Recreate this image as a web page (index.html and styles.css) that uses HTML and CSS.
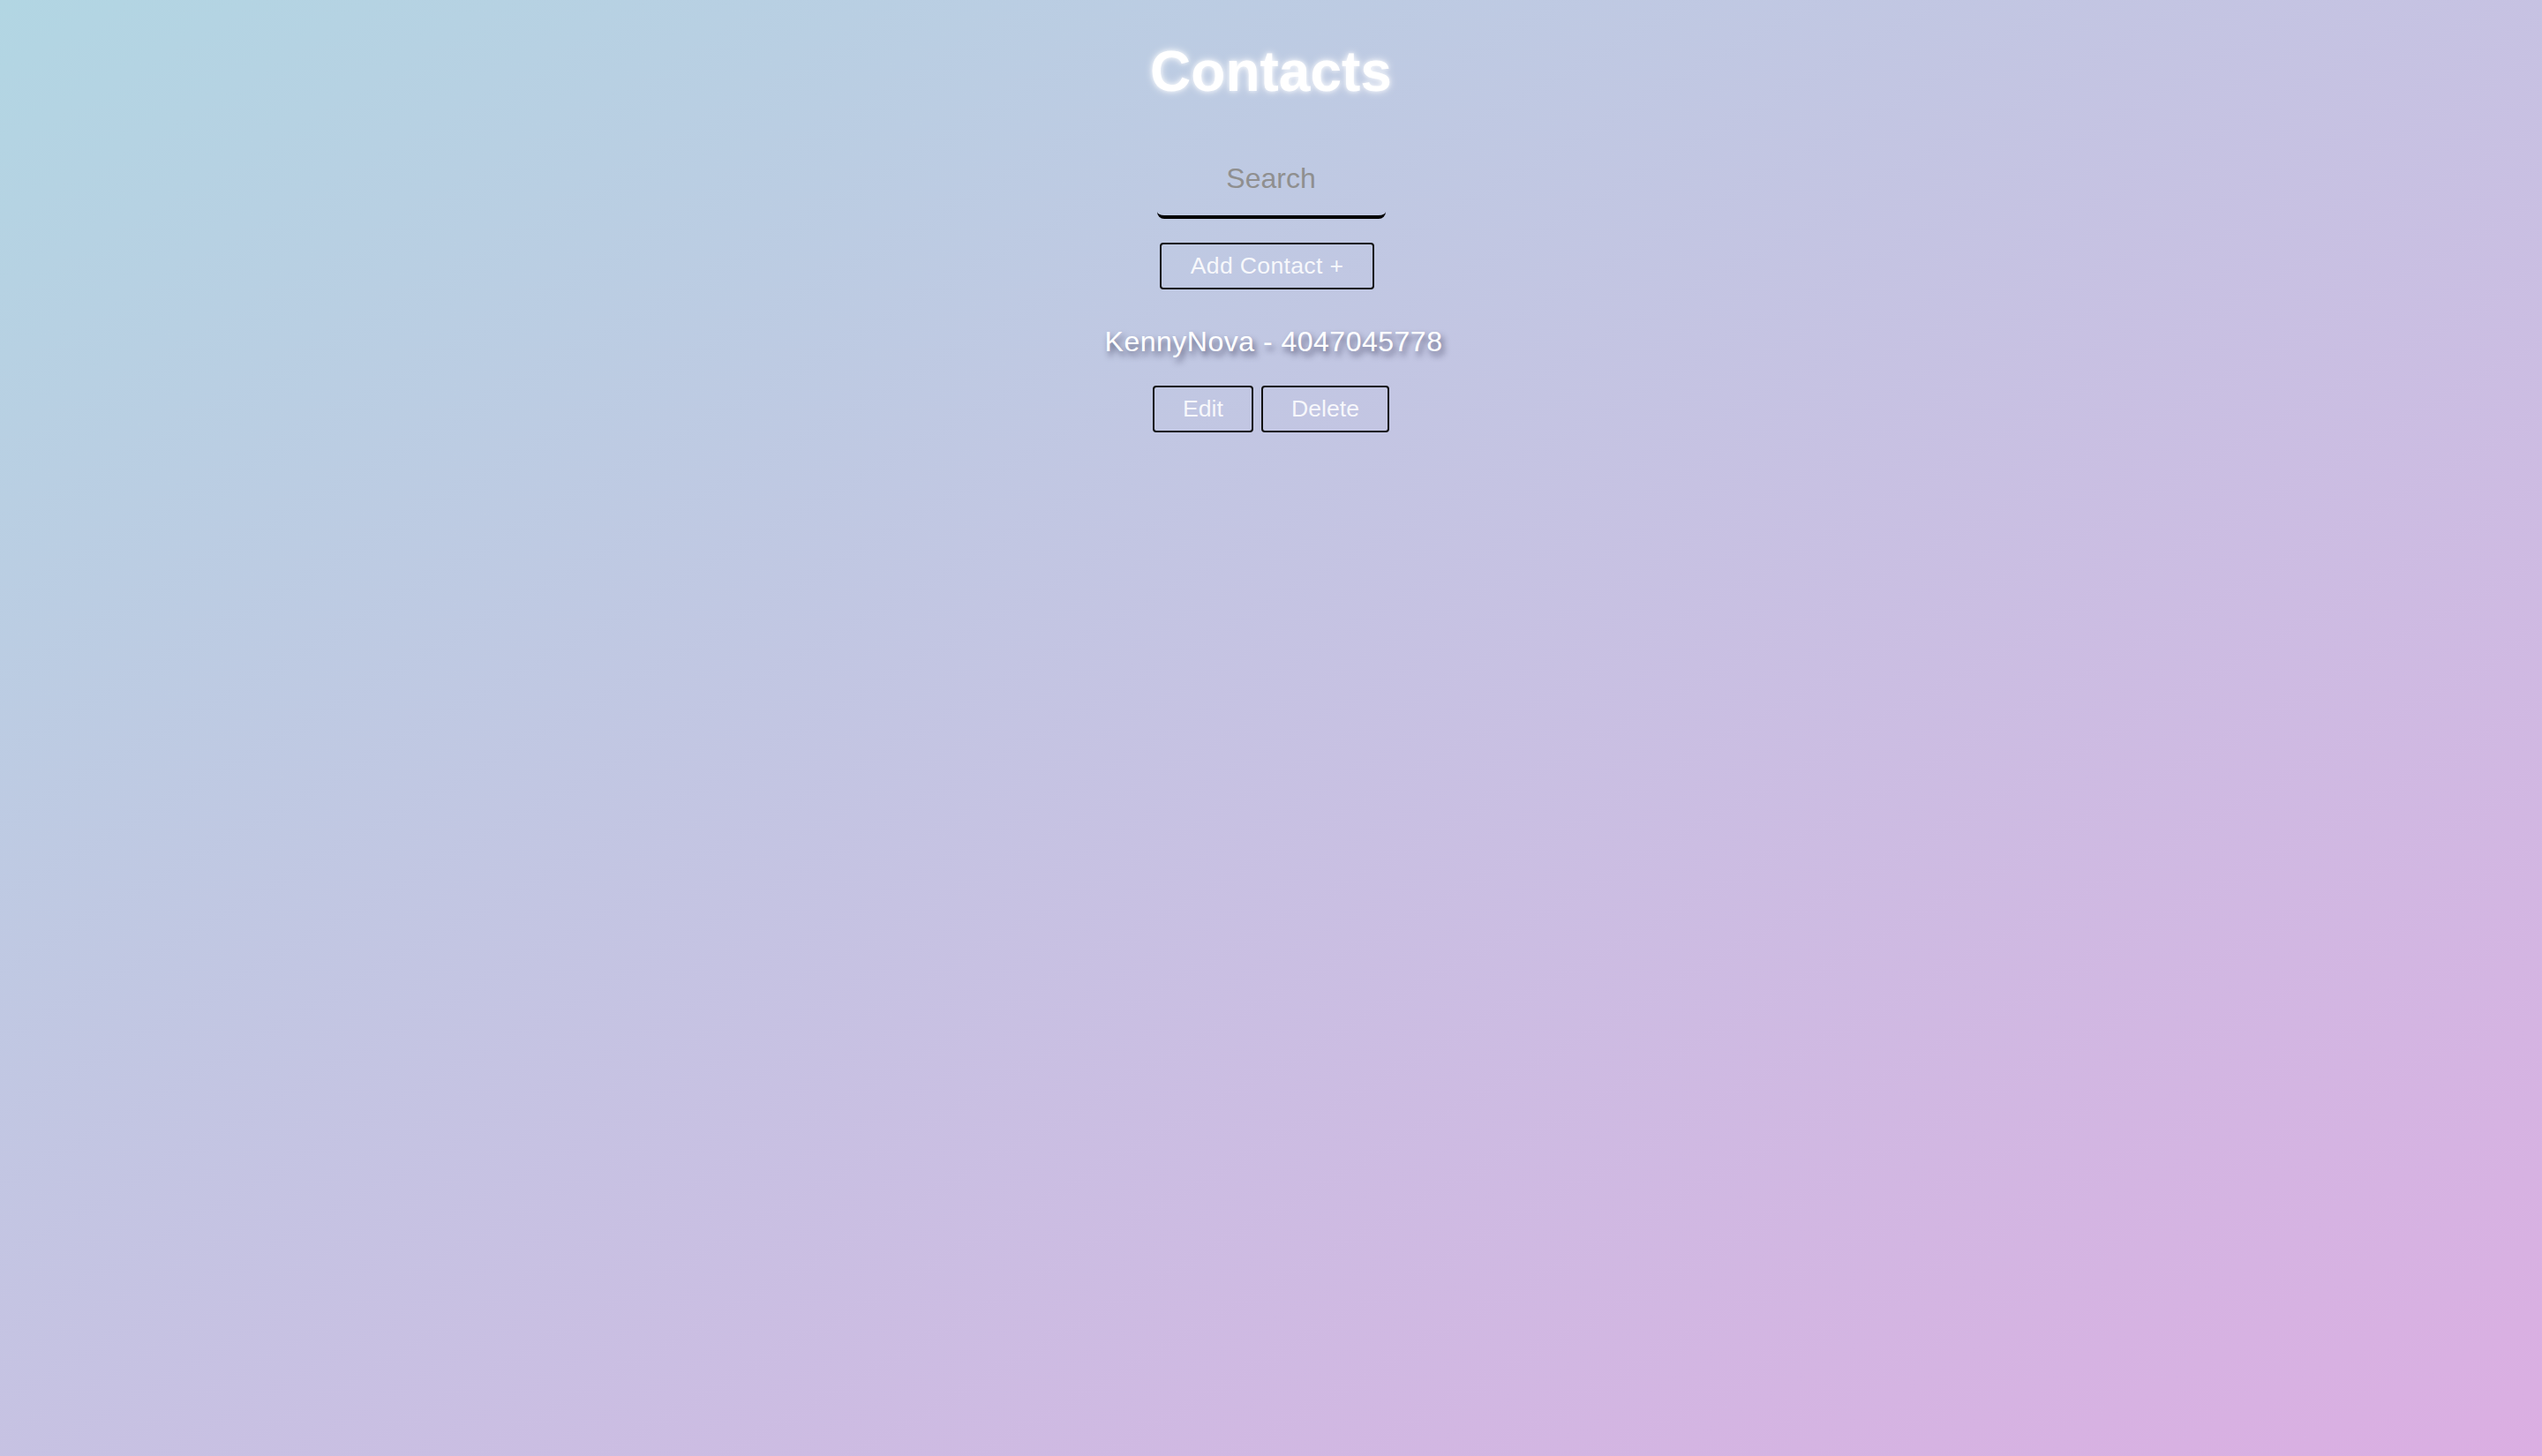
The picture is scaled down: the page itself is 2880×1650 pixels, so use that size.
FILE: index.html
```html
<!DOCTYPE html>
<html lang="en">
<head>
<meta charset="utf-8">
<title>Contacts</title>
<link rel="stylesheet" href="styles.css">
</head>
<body>
<main class="app">
  <h1 class="title">Contacts</h1>
  <input class="search" type="text" placeholder="Search">
  <div class="add-row">
    <button class="btn btn-add">Add Contact +</button>
  </div>
  <ul class="contacts">
    <li class="contact">
      <p class="contact-name">KennyNova - 4047045778</p>
      <div class="contact-actions">
        <button class="btn">Edit</button>
        <button class="btn">Delete</button>
      </div>
    </li>
  </ul>
</main>
</body>
</html>
```

FILE: styles.css
```css
html, body {
  margin: 0;
  padding: 0;
}

body {
  min-height: 100vh;
  background: linear-gradient(to bottom right, #b2d6e3, #dbaee2);
  font-family: "Liberation Sans", Arial, sans-serif;
  color: #fff;
}

.app {
  display: flex;
  flex-direction: column;
  align-items: center;
  padding-top: 44px;
}

.title {
  margin: 0;
  font-size: 64px;
  line-height: 74px;
  font-weight: 700;
  color: #fff;
  text-shadow: 0 0 10px rgba(255, 255, 255, 0.9), 0 0 4px rgba(255, 255, 255, 0.6);
}

.search {
  margin: 42px 0 0 0;
  width: 259px;
  height: 88px;
  box-sizing: border-box;
  padding: 0;
  border: none;
  border-bottom: 4px solid #000;
  border-radius: 8px;
  background: transparent;
  font-family: "Liberation Sans", Arial, sans-serif;
  font-size: 32px;
  text-align: center;
  color: #333;
  outline: none;
}

.search::placeholder {
  color: #8f8f8f;
}

.add-row {
  margin-top: 27px;
  display: flex;
  justify-content: center;
}

.btn {
  font-family: "Liberation Sans", Arial, sans-serif;
  font-size: 26.67px;
  line-height: 31px;
  font-weight: 400;
  color: rgba(255, 255, 255, 0.88);
  background: transparent;
  border: 2px solid #111;
  border-radius: 4px;
  padding: 9px 32px;
  margin: 0;
}

.btn-add {
  margin-right: 9px;
  padding: 9px 33px;
  letter-spacing: 0.3px;
}

.contacts {
  list-style: none;
  margin: 41px 0 0 0;
  padding: 0;
}

.contact {
  display: flex;
  flex-direction: column;
  align-items: center;
}

.contact-name {
  margin: 0;
  padding-left: 6px;
  font-size: 32px;
  line-height: 37px;
  letter-spacing: 0.5px;
  color: #fff;
  text-shadow: 3px 5px 7px rgba(40, 40, 70, 0.65);
}

.contact-actions {
  margin-top: 31px;
  display: flex;
  gap: 9px;
}
```
